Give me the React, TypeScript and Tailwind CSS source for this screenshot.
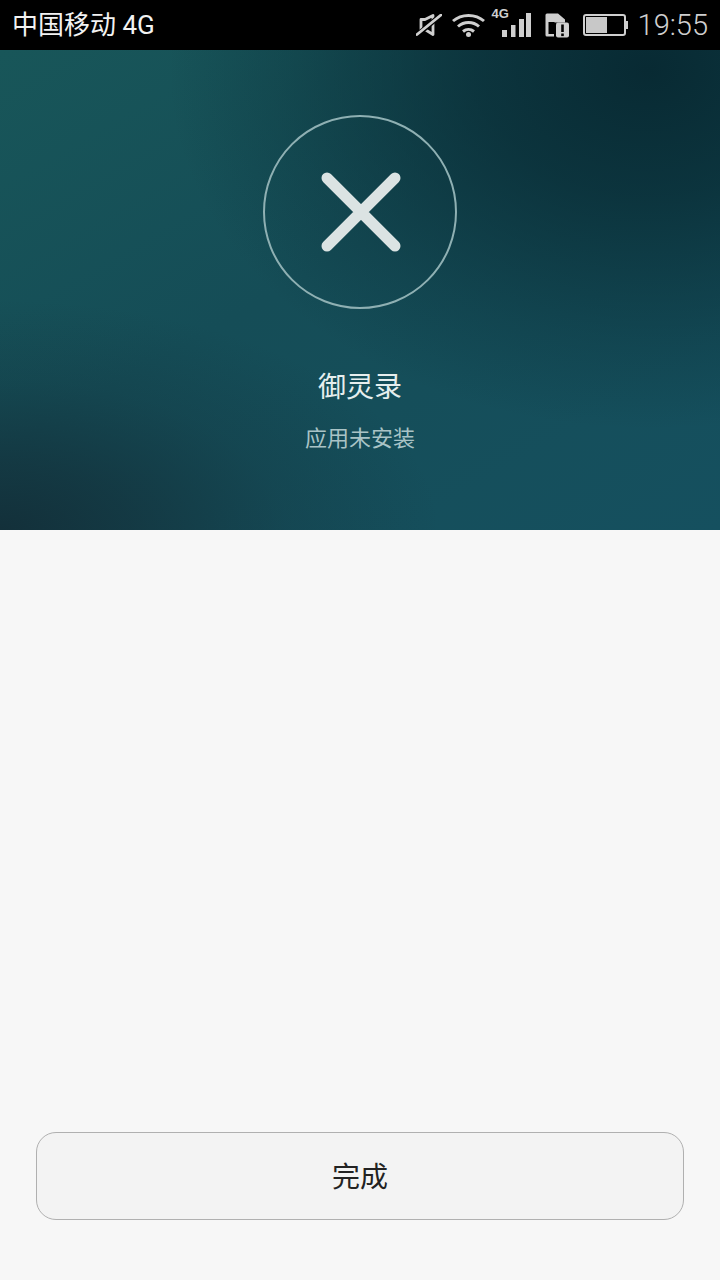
const CJK = 'font-["Roboto","Noto_Sans_CJK_SC",sans-serif]';

function StatusIcons() {
  return (
    <div className="flex items-center">
      {/* muted speaker */}
      <svg width="26" height="22" viewBox="0 0 26 22" fill="none" stroke="#cfcfcf" className="mr-[10px]">
        <path d="M5 5.500h4L17 1.500V20.500L9 15.500H5z" strokeWidth="2.800" strokeLinejoin="round" />
        <path d="M0 22 26 0" stroke="#000" strokeWidth="5" />
        <path d="M1 20.500 25 1" strokeWidth="2.800" strokeLinecap="round" />
      </svg>
      {/* wifi */}
      <svg width="33" height="24" viewBox="0 0 33 24" fill="none" stroke="#cfcfcf" strokeWidth="3" className="mr-[7px]">
        <path d="M1 8C9.500.500 23.500.500 32 8" />
        <path d="M6 13.500c6-5.300 15-5.300 21 0" />
        <path d="M11 18.500c3.300-2.700 7.700-2.700 11 0" />
        <circle cx="16.500" cy="21.500" r="2.500" fill="#cfcfcf" stroke="none" />
      </svg>
      {/* 4G signal */}
      <div className="relative mr-[14px] h-[32px] w-[39px]">
        <span className="absolute left-0 top-[-2px] font-['Liberation_Sans',sans-serif] text-[13px] font-bold leading-[14px] text-[#cfcfcf]">
          4G
        </span>
        <svg width="39" height="32" viewBox="0 0 39 32" fill="#cfcfcf">
          <rect x="10" y="21" width="5" height="7" />
          <rect x="19" y="16" width="4.500" height="12" />
          <rect x="27" y="10" width="5" height="18" />
          <rect x="34" y="4" width="5" height="24" />
        </svg>
      </div>
      {/* sim card with alert */}
      <svg width="24" height="25" viewBox="0 0 24 25" fill="none" className="mr-[14px]">
        <path d="M2 0.500h11l7 6v3H9v14H2A1.500 1.500 0 0 1 .500 22V2A1.500 1.500 0 0 1 2 .500z" fill="#cfcfcf" />
        <rect x="3.500" y="9" width="6" height="12" fill="#000" />
        <rect x="11" y="9.500" width="13" height="15" rx="2" fill="#cfcfcf" />
        <rect x="16.200" y="11.500" width="2.600" height="7.500" fill="#000" />
        <rect x="16.200" y="20.500" width="2.600" height="2.600" fill="#000" />
      </svg>
      {/* battery */}
      <div className="mr-[10px] flex items-center">
        <div className="h-[22px] w-[43px] rounded-[3px] border-2 border-[#cfcfcf] p-[1px]">
          <div className="h-full w-[21px] bg-[#c8c8c8]" />
        </div>
        <div className="h-[8px] w-[2px] bg-[#cfcfcf]" />
      </div>
      <span className="font-['Roboto',sans-serif] text-[29px] leading-none font-light text-[#cfcfcf]">19:55</span>
    </div>
  );
}

export default function App() {
  return (
    <div className={`flex h-[1280px] w-[720px] flex-col overflow-hidden bg-[#f7f7f7] ${CJK}`}>
      <div className="flex h-[50px] shrink-0 items-center justify-between bg-black pl-[12px] pr-[12px]">
        <span className="text-[26px] leading-none text-[#f2f2f2]">中国移动 4G</span>
        <StatusIcons />
      </div>

      {/* result header */}
      <div className="flex h-[480px] shrink-0 flex-col items-center bg-[radial-gradient(ellipse_440px_230px_at_0%_100%,#13303a_0%,#13303ab0_30%,#13303a40_65%,#13303a00_100%),radial-gradient(ellipse_480px_360px_at_90%_4%,#082a33_0%,#082a33b8_35%,#082a3340_75%,#082a3300_100%),linear-gradient(150deg,#185659_0%,#154d57_45%,#15505f_100%)] pt-[65px]">
        <div className="flex h-[194px] w-[194px] items-center justify-center rounded-full border-2 border-[#8fb0b3]">
          <svg width="80" height="80" viewBox="0 0 80 80" stroke="#dbe3e3" strokeWidth="11" strokeLinecap="round" className="ml-[2px]">
            <path d="M6 6 74 74M74 6 6 74" />
          </svg>
        </div>
        <div className="mt-[61px] text-[28px] leading-[36px] text-[#e6eeee]">御灵录</div>
        <div className="mt-[19px] text-[22px] leading-[28px] text-[#a9c3c6]">应用未安装</div>
      </div>

      <div className="flex flex-1 flex-col justify-end px-[36px] pb-[60px]">
        <button className="flex h-[88px] w-full items-center justify-center rounded-[20px] border border-[#b0b0b0] bg-[#f3f3f3] pt-[4px] text-[28px] text-[#222222]">
          完成
        </button>
      </div>
    </div>
  );
}
